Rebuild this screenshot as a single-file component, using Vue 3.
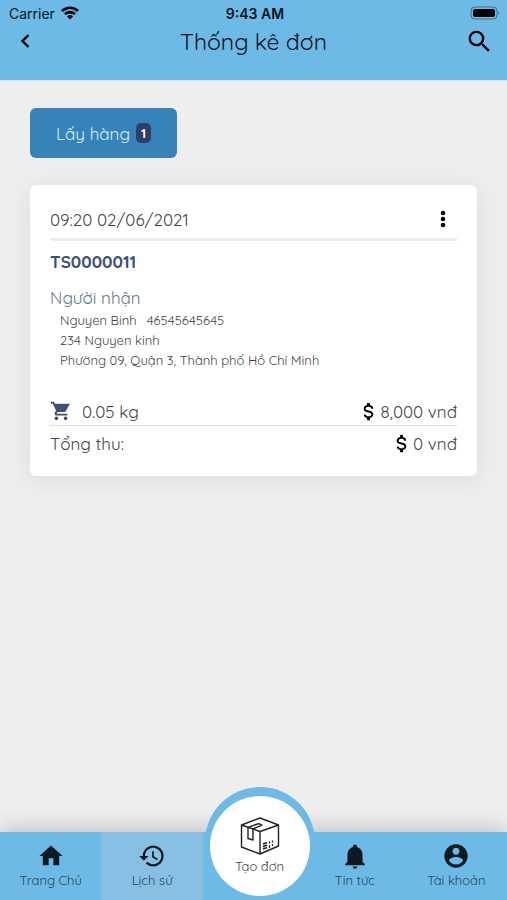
<script setup>
import { ref } from 'vue'

const activeTab = ref('history')
const waiting = ref(1)

const orders = ref([
   {
      id: 'TS0000011',
      time: '09:20 02/06/2021',
      name: 'Nguyen Binh',
      phone: '46545645645',
      address: ['234 Nguyen kinh', 'Phường 09, Quận 3, Thành phố Hồ Chí Minh'],
      weight: '0.05 kg',
      fee: '8,000 vnđ',
      total: '0 vnđ',
   },
])

const dollar =
   'M7 15h2c0 1.08 1.37 2 3 2s3-.92 3-2c0-1.1-1.04-1.5-3.24-2.03C9.64 12.44 7 11.78 7 9c0-1.79 1.47-3.31 3.5-3.82V3h3v2.18C15.53 5.69 17 7.21 17 9h-2c0-1.08-1.37-2-3-2s-3 .92-3 2c0 1.1 1.04 1.5 3.24 2.03C14.36 11.56 17 12.22 17 15c0 1.79-1.47 3.31-3.5 3.82V21h-3v-2.18C8.47 18.31 7 16.79 7 15z'

const tabs = [
   { id: 'home', label: 'Trang Chủ', icon: 'M10 20v-6h4v6h5v-8h3L12 3 2 12h3v8z' },
   {
      id: 'history',
      label: 'Lịch sử',
      icon: 'M13 3a9 9 0 0 0-9 9H1l3.89 3.89.07.14L9 12H6c0-3.87 3.13-7 7-7s7 3.13 7 7-3.13 7-7 7c-1.93 0-3.68-.79-4.94-2.06l-1.42 1.42A8.954 8.954 0 0 0 13 21a9 9 0 0 0 0-18zm-1 5v5l4.28 2.54.72-1.21-3.5-2.08V8H12z',
   },
   { id: 'create', label: 'Tạo đơn' },
   {
      id: 'news',
      label: 'Tin tức',
      icon: 'M20.5 19v1h-17v-1l2-2v-6c0-3.1 1.7-5.83 4.7-6.71V4a1.8 1.8 0 0 1 3.6 0v.29c3 .88 4.7 3.61 4.7 6.71v6zm-6.5 2a2 2 0 0 1-4 0z',
   },
   {
      id: 'account',
      label: 'Tài khoản',
      icon: 'M12 2C6.48 2 2 6.48 2 12s4.48 10 10 10 10-4.48 10-10S17.52 2 12 2zm0 3c1.66 0 3 1.34 3 3s-1.34 3-3 3-3-1.34-3-3 1.34-3 3-3zm0 14.2c-2.5 0-4.71-1.28-6-3.22.03-1.99 4-3.08 6-3.08 1.99 0 5.97 1.09 6 3.08-1.29 1.94-3.5 3.22-6 3.22z',
   },
]
</script>

<template>
   <div class="app">
      <header class="header">
         <div class="status">
            <span class="carrier">
               Carrier
               <svg width="18" height="14" viewBox="0 0 18 14">
                  <path d="M1 5a11.5 11.5 0 0 1 16 0M4 8.2a7 7 0 0 1 10 0" fill="none" stroke="#000" stroke-width="2.6" />
                  <path d="M6 10.5a4.3 4.3 0 0 1 6 0L9 13.5z" />
               </svg>
            </span>
            <span class="clock">9:43 AM</span>
            <svg class="battery" width="31" height="14" viewBox="0 0 31 14">
               <rect x="1" y="1" width="26" height="12" rx="4" fill="none" stroke="#40718d" />
               <rect x="3" y="3" width="22" height="8" rx="2" />
               <path d="M28 5q2 2 0 4z" fill="#40718d" />
            </svg>
         </div>
         <div class="bar">
            <button class="icon-button" aria-label="Quay lại">
               <svg width="24" height="24" viewBox="0 0 24 24">
                  <path d="M15.5 6 9.5 12l6 6" fill="none" stroke="#000" stroke-width="2.4" />
               </svg>
            </button>
            <h1>Thống kê đơn</h1>
            <button class="icon-button search" aria-label="Tìm kiếm">
               <svg width="29" height="29" viewBox="0 0 24 24">
                  <path d="M15.5 14h-.79l-.28-.27A6.471 6.471 0 0 0 16 9.5 6.5 6.5 0 1 0 9.5 16c1.61 0 3.09-.59 4.23-1.57l.27.28v.79l5 4.99L20.49 19l-4.99-5zm-6 0C7.01 14 5 11.99 5 9.5S7.01 5 9.5 5 14 7.01 14 9.5 11.99 14 9.5 14z" />
               </svg>
            </button>
         </div>
      </header>

      <main class="content">
         <button class="filter">Lấy hàng <span class="count">{{ waiting }}</span></button>

         <article v-for="order in orders" :key="order.id" class="card">
            <div class="card-head">
               <time>{{ order.time }}</time>
               <button class="icon-button" aria-label="Tùy chọn">
                  <svg width="28" height="24" viewBox="0 0 28 24">
                     <circle cx="14" cy="6" r="2.3" />
                     <circle cx="14" cy="12" r="2.3" />
                     <circle cx="14" cy="18" r="2.3" />
                  </svg>
               </button>
            </div>
            <h2>{{ order.id }}</h2>
            <h3>Người nhận</h3>
            <div class="receiver">
               <p>
                  <span>{{ order.name }}</span>
                  <span>{{ order.phone }}</span>
               </p>
               <p v-for="line in order.address" :key="line">{{ line }}</p>
            </div>
            <div class="row fee">
               <span class="weight">
                  <svg width="22" height="22" viewBox="0 0 24 24" fill="#3d5078">
                     <path d="M7 18c-1.1 0-1.99.9-1.99 2S5.9 22 7 22s2-.9 2-2-.9-2-2-2zM1 2v2h2l3.6 7.59-1.35 2.45c-.16.28-.25.61-.25.96 0 1.1.9 2 2 2h12v-2H7.42c-.14 0-.25-.11-.25-.25l.03-.12.9-1.63h7.45c.75 0 1.41-.41 1.75-1.03L21.7 4H5.21l-.94-2H1zm16 16c-1.1 0-1.99.9-1.99 2s.89 2 1.99 2 2-.9 2-2-.9-2-2-2z" />
                  </svg>
                  {{ order.weight }}
               </span>
               <span class="money">
                  <svg width="23" height="23" viewBox="0 0 24 24"><path :d="dollar" /></svg>
                  {{ order.fee }}
               </span>
            </div>
            <div class="row">
               <span>Tổng thu:</span>
               <span class="money">
                  <svg width="23" height="23" viewBox="0 0 24 24"><path :d="dollar" /></svg>
                  {{ order.total }}
               </span>
            </div>
         </article>
      </main>

      <nav class="tabs">
         <a
            v-for="tab in tabs"
            :key="tab.id"
            href="#"
            class="tab"
            :class="{ active: activeTab === tab.id, create: tab.id === 'create' }"
            @click.prevent="activeTab = tab.id"
         >
            <span v-if="tab.id === 'create'" class="circle">
               <svg width="40" height="40" viewBox="0 0 40 40" fill="none" stroke="#222" stroke-width="1.4" stroke-linejoin="round">
                  <path d="M1.5 9 20 2l18.500 7v21L20 38 1.5 31zM1.5 9 20 15.5 38.5 9M20 15.5V38" />
                  <path d="M8 11.3 17.5 8q2-.7 4.500 1.2L13 12.800V24L8 22.5z" />
                  <path d="M23 28l4-1.500M23 30.500l4-1.500M23 33l4-1.500" stroke-width="1.6" />
                  <path d="M29.500 25.500v2M29.500 29v3M32.500 24.500v2M32.500 28v2" stroke-width="1.2" />
               </svg>
               <span>{{ tab.label }}</span>
            </span>
            <template v-else>
               <svg width="28" height="28" viewBox="0 0 24 24"><path :d="tab.icon" /></svg>
               <span>{{ tab.label }}</span>
            </template>
         </a>
      </nav>
   </div>
</template>

<style>
body {
   margin: 0;
   background-color: #eee;
}
</style>

<style scoped>
.app {
   min-height: 100vh;
   display: flex;
   flex-direction: column;
   font-family: Quicksand, Lato, 'Noto Sans', sans-serif;
   color: #444;
}

h1,
h2,
h3,
p {
   margin: 0;
   font-weight: 400;
}

svg {
   display: block;
}

button {
   font-family: inherit;
   border: none;
   cursor: pointer;
}

.header {
   height: 81px;
   background-color: #6dbae6;
   border-bottom: 1px solid #d5e2e9;
   box-sizing: border-box;
   color: #06121a;
}

.status {
   display: grid;
   grid-template-columns: 1fr auto 1fr;
   align-items: center;
   height: 26px;
   padding: 0 6px 0 9px;
   font: 14px Inter, sans-serif;
}

.carrier {
   display: flex;
   align-items: center;
   gap: 6px;
}

.clock {
   font-weight: 600;
}

.battery {
   justify-self: end;
}

.bar {
   display: grid;
   grid-template-columns: 1fr auto 1fr;
   align-items: center;
   height: 30px;
   padding: 0 13px;
}

h1 {
   font-size: 23px;
}

.icon-button {
   padding: 0;
   background: none;
}

.search {
   justify-self: end;
}

.content {
   flex: 1;
   padding: 27px 30px;
}

.filter {
   height: 50px;
   padding: 0 26px;
   display: flex;
   align-items: center;
   gap: 6px;
   border-radius: 6px;
   background-color: #3583b8;
   color: #d9eefa;
   font-size: 17px;
}

.count {
   padding: 0 5px;
   border-radius: 5px;
   background-color: #303f66;
   color: white;
   font-size: 13px;
   font-weight: 700;
   line-height: 20px;
}

.card {
   margin-top: 27px;
   padding: 20px 20px 16px;
   border-radius: 6px;
   background-color: white;
   box-shadow: 0 4px 24px rgba(0, 0, 0, 0.08);
   font-size: 17px;
}

.card-head {
   display: flex;
   align-items: center;
   justify-content: space-between;
   height: 28px;
   padding-bottom: 5px;
   border-bottom: 3px solid #eee;
}

h2 {
   padding-top: 9px;
   color: #3d5078;
   font-size: 17px;
   font-weight: 700;
   line-height: 24px;
}

h3 {
   padding-top: 12px;
   color: #66768f;
   font-size: 17px;
   line-height: 24px;
}

.receiver {
   padding: 0 10px 27px;
   font-size: 13px;
   line-height: 20px;
}

.receiver span {
   margin-right: 10px;
}

.row {
   display: flex;
   align-items: center;
   justify-content: space-between;
   height: 34px;
}

.fee {
   height: 28px;
   border-bottom: 1px solid #ddd;
}

.weight,
.money {
   display: flex;
   align-items: center;
}

.weight {
   gap: 10px;
}

.tabs {
   display: flex;
   height: 68px;
   background-color: #6dbae6;
   box-shadow: 0 -4px 18px rgba(0, 0, 0, 0.18);
}

.tab {
   flex: 1 0 0;
   display: flex;
   flex-direction: column;
   align-items: center;
   padding-top: 10px;
   box-sizing: border-box;
   color: #26485b;
   font-size: 13px;
   line-height: 20px;
   text-decoration: none;
}

.tab svg {
   fill: #0c1a22;
}

.active {
   background-color: #87c0e3;
}

.create {
   position: relative;
   padding: 0;
}

/* raised button that overlaps the top edge of the tab bar */
.circle {
   position: absolute;
   bottom: 4px;
   left: 50%;
   width: 100px;
   height: 100px;
   padding-top: 20px;
   box-sizing: border-box;
   display: flex;
   flex-direction: column;
   align-items: center;
   border-radius: 50%;
   background-color: white;
   box-shadow: 0 -4px 0 5px #6dbae6;
   color: #444;
   transform: translateX(-44%);
}

.create .circle svg {
   fill: none;
}
</style>
